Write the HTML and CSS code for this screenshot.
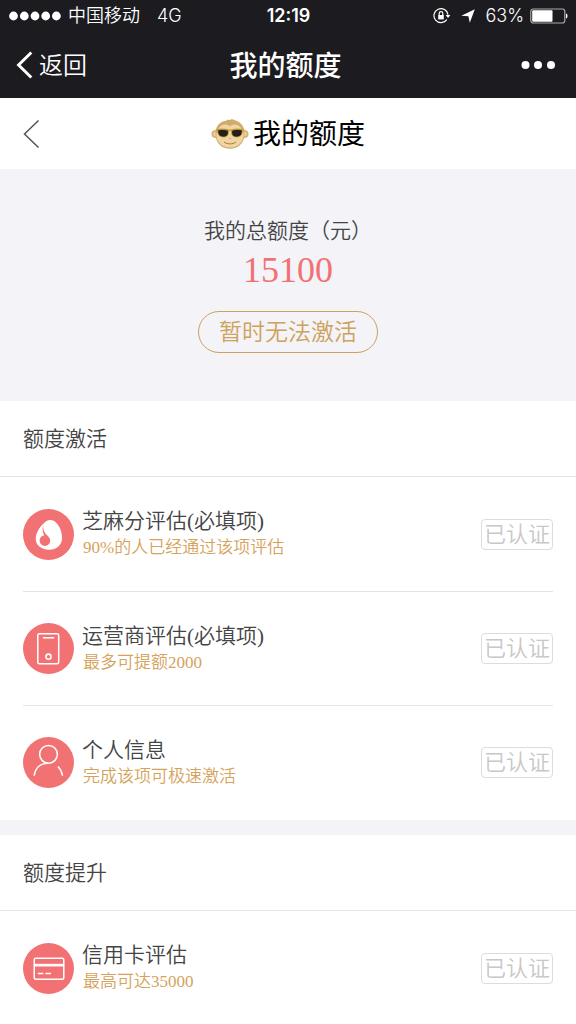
FILE: index.html
```html
<!DOCTYPE html>
<html lang="zh-CN">
<head>
<meta charset="utf-8">
<meta name="viewport" content="width=device-width, initial-scale=1">
<title>我的额度</title>
<link rel="stylesheet" href="styles.css">
</head>
<body>
<div class="top">
  <div class="status">
    <div class="status-left">
      <svg class="signal" width="52" height="10" viewBox="0 0 52 10" fill="#fff"><circle cx="4.5" cy="5" r="4.4"/><circle cx="15.3" cy="5" r="4.4"/><circle cx="26" cy="5" r="4.4"/><circle cx="36.7" cy="5" r="4.4"/><circle cx="47.4" cy="5" r="4.4"/></svg>
      <span>中国移动</span>
      <span class="network">4G</span>
    </div>
    <div class="clock">12:19</div>
    <div class="status-right">
      <svg width="18" height="16" viewBox="0 0 18 16" fill="none" stroke="#fff" stroke-width="1.2"><path d="M13.8 11.5A7 7 0 1 1 14.9 6.8"/><path d="M12.6 7h4.8L15 10z" fill="#fff" stroke="none"/><path d="M5.2 7h5.6v4.4H5.2z" fill="#fff" stroke="none"/><path d="M6.2 7V5.4a1.8 1.8 0 0 1 3.6 0V7"/></svg>
      <svg class="locate" width="14" height="14" viewBox="0 0 14 14" fill="#fff"><path d="M13.8.3 8.800 13.8 7.400 7.300.3 6.800z"/></svg>
      <span>63%</span>
      <svg width="38" height="16" viewBox="0 0 38 16"><rect x=".8" y="1" width="34" height="14" rx="2.5" fill="none" stroke="#aaa" stroke-width="1.2"/><rect x="2.2" y="2.3" width="20.3" height="11.4" rx="1" fill="#fff"/><path d="M36 5.5c2 .3 2 4.700 0 5z" fill="#fff"/></svg>
    </div>
  </div>
  <div class="nav">
    <button class="nav-back" type="button">
      <svg width="17" height="28" viewBox="0 0 17 28" fill="none" stroke="#fff" stroke-width="3"><path d="M15.300 1.500 2.600 14 15.300 26.500"/></svg>
      <span>返回</span>
    </button>
    <div class="nav-title">我的额度</div>
    <button class="nav-more" type="button" aria-label="更多">
      <svg width="34" height="10" viewBox="0 0 34 10" fill="#fff"><circle cx="4.500" cy="5" r="4"/><circle cx="17" cy="5" r="4"/><circle cx="30" cy="5" r="4"/></svg>
    </button>
  </div>
</div>

<header class="header">
  <button class="header-back" type="button" aria-label="返回">
    <svg width="17" height="30" viewBox="0 0 17 30" fill="none" stroke="#555" stroke-width="1.500"><path d="M15.500 1.500 1.500 15 15.500 28.500"/></svg>
  </button>
  <h1 class="header-title">
    <svg width="38" height="32" viewBox="0 0 38 32">
      <circle cx="4.500" cy="16" r="4" fill="#d8b477"/><circle cx="33.500" cy="16" r="4" fill="#d8b477"/>
      <circle cx="4.800" cy="16" r="2.300" fill="#f1d7a5"/><circle cx="33.200" cy="16" r="2.300" fill="#f1d7a5"/>
      <path d="M13 3c2 0 3-.8 4-1.800.3.900.9 1 1.600.7 1.500-.700 3.400-.9 5.400.4C31 4.500 34 10 33.500 17 33 25.500 27 30.800 19 30.800S5 25.500 4.500 17C4 10 7 5 13 3z" fill="#d0ab6d"/>
      <path d="M19 8c3-2 7-2.500 10 .8 4.500 5 4.500 11.200 1 15.500-2.500 3.700-6.500 5.300-11 5.300S10.500 28 8 24.300c-3.500-4.300-3.500-10.500 1-15.500C12 5.500 16 6 19 8z" fill="#f0d5a1"/>
      <path d="M5 12c4-1 9-1 13 .3h2c4-1.300 9-1.300 13-.3" fill="none" stroke="#cda23e" stroke-width="1.600"/>
      <path d="M6.800 12c3-.8 7.500-.8 10.500.5.500 4.200-1 6.500-4.800 6.500s-6-2-5.700-7zM31.200 12c-3-.8-7.500-.8-10.500.5-.5 4.200 1 6.500 4.800 6.500s6-2 5.700-7z" fill="#22201d" stroke="#c99b32" stroke-width=".8"/>
      <path d="M13 24c3.500 2.500 8.500 2.500 12 0" fill="none" stroke="#a5763d" stroke-width="1"/>
      <path d="M18 20.500h.6m1 0h.6" stroke="#a5763d" stroke-width=".8"/>
    </svg>
    <span>我的额度</span>
  </h1>
</header>

<main>
  <section class="summary">
    <div class="summary-label">我的总额度（元）</div>
    <div class="summary-amount">15100</div>
    <button class="summary-button" type="button">暂时无法激活</button>
  </section>

  <section class="group">
    <h2 class="group-title">额度激活</h2>
    <ul class="list">
      <li class="item">
        <svg class="item-icon" viewBox="0 0 50 50"><circle cx="25" cy="25" r="25" fill="#f27173"/><path d="M20.500 14C22.500 11 26.500 9.800 30 11.500c5.500 3 8.500 11 8.300 17.500-.3 7-6 11.300-13 11-7.500-.2-12.800-4.500-12.800-10.500 0-6 3.500-11.500 8-15.500z" fill="#fff"/><path d="M20.300 15c-1.300 4 .2 7.500 2.600 10 2.500 2.600 3.800 3.600 3.800 6a5.200 5.200 0 0 1-10.400 0c0-2.700 1.800-4.600 4.600-5.200-2-3.400-2.300-7-.6-10.800z" fill="#f27173"/></svg>
        <div class="item-text"><h3 class="item-title">芝麻分评估(必填项)</h3><p class="item-note">90%的人已经通过该项评估</p></div>
        <span class="badge">已认证</span>
      </li>
      <li class="item">
        <svg class="item-icon" viewBox="0 0 50 50"><circle cx="25" cy="25" r="25" fill="#f27173"/><g fill="none" stroke="#fff" stroke-width="1.500"><rect x="14.500" y="10.500" width="20.500" height="29.500" rx="1.500"/><path d="M19.500 14.500h11"/><circle cx="25" cy="33" r="2.500"/></g></svg>
        <div class="item-text"><h3 class="item-title">运营商评估(必填项)</h3><p class="item-note">最多可提额2000</p></div>
        <span class="badge">已认证</span>
      </li>
      <li class="item">
        <svg class="item-icon" viewBox="0 0 50 50"><circle cx="25" cy="25" r="25" fill="#f27173"/><g fill="none" stroke="#fff" stroke-width="1.500"><circle cx="25" cy="17" r="8.700"/><path d="M11 38c1-7.500 6-12.300 13.500-12.300M34.300 29c2.200 2.300 3.900 5.500 4.400 9"/></g></svg>
        <div class="item-text"><h3 class="item-title">个人信息</h3><p class="item-note">完成该项可极速激活</p></div>
        <span class="badge">已认证</span>
      </li>
    </ul>
  </section>

  <section class="group">
    <h2 class="group-title">额度提升</h2>
    <ul class="list">
      <li class="item">
        <svg class="item-icon" viewBox="0 0 50 50"><circle cx="25" cy="25" r="25" fill="#f27173"/><rect x="11" y="15" width="29" height="20.500" rx="1.500" fill="none" stroke="#fff" stroke-width="1.500"/><path d="M11 21.700h29" stroke="#fff" stroke-width="2.600"/><path d="M14.500 29.800h5.500m2 0h5.500" stroke="#fff" stroke-width="1.500"/></svg>
        <div class="item-text"><h3 class="item-title">信用卡评估</h3><p class="item-note">最高可达35000</p></div>
        <span class="badge">已认证</span>
      </li>
    </ul>
  </section>
</main>
</body>
</html>
```
FILE: styles.css
```css
* {
  box-sizing: border-box;
}

body {
  margin: 0;
  background: #f3f3f8;
  color: #444;
  font-family: "Liberation Serif", "Noto Sans CJK SC", serif;
  font-weight: 350;
}

h1, h2, h3, p, ul {
  margin: 0;
  padding: 0;
  font-weight: inherit;
}

button {
  padding: 0;
  border: 0;
  background: none;
  color: inherit;
  font: inherit;
}

svg {
  display: block;
  flex: none;
}

.top {
  background: #1c1b20;
  color: #fff;
  font-family: Inter, "Noto Sans CJK SC", sans-serif;
}

.status,
.nav {
  display: grid;
  grid-template-columns: 1fr auto 1fr;
  align-items: center;
}

.status {
  height: 32px;
  padding: 0 8px 0 9px;
  font-size: 18px;
  line-height: 32px;
}

.status-left,
.status-right {
  display: flex;
  align-items: center;
  gap: 7px;
}

.status-right {
  justify-content: flex-end;
  gap: 6px;
}

.network {
  margin-left: 10px;
}

.locate {
  margin: 0 4px;
}

.clock {
  font-weight: 600;
}

.nav {
  height: 66px;
  padding: 0 21px 0 16px;
}

.nav-back {
  display: flex;
  align-items: center;
  gap: 6px;
  font-size: 24px;
  line-height: 36px;
}

.nav-back span {
  padding-top: 2px;
}

.nav-title {
  padding-top: 2px;
  font-size: 28px;
  font-weight: 500;
  line-height: 40px;
}

.nav-more {
  justify-self: end;
}

.header {
  display: grid;
  grid-template-columns: 1fr auto 1fr;
  align-items: center;
  height: 71px;
  padding: 0 23px;
  background: #fff;
  color: #000;
}

.header-back {
  justify-self: start;
}

.header-title {
  display: flex;
  align-items: center;
  gap: 4px;
  font-size: 28px;
  font-weight: 400;
  line-height: 40px;
}

.header-title span {
  padding-top: 2px;
}

.summary {
  display: flex;
  flex-direction: column;
  align-items: center;
  padding: 46px 24px 48px;
}

.summary-label {
  font-size: 21px;
  line-height: 32px;
}

.summary-amount {
  color: #f27173;
  font-size: 36px;
  line-height: 46px;
}

.summary-button {
  margin-top: 18px;
  padding: 1px 20px 0;
  border: 1px solid #cda25a;
  border-radius: 21px;
  color: #cda25a;
  font-size: 23px;
  line-height: 39px;
}

.group {
  background: #fff;
}

.group + .group {
  margin-top: 15px;
}

.group-title {
  padding: 1px 23px 0;
  border-bottom: 1px solid #e3e3e3;
  font-size: 21px;
  line-height: 74px;
}

.list {
  padding: 0 23px 1px;
  list-style: none;
}

.item {
  display: flex;
  align-items: center;
  height: 114px;
}

.item + .item {
  border-top: 1px solid #e3e3e3;
}

.item-icon {
  width: 51px;
  height: 51px;
}

.item-text {
  flex: 1;
  margin-left: 8px;
}

.item-title {
  font-size: 21px;
  line-height: 28px;
}

.item-note {
  padding-left: 1px;
  color: #d5a35b;
  font-size: 17px;
  line-height: 26px;
}

.badge {
  padding: 0 2px;
  border: 1px solid #dcdcdc;
  border-radius: 4px;
  color: #c8c8c8;
  font-size: 22px;
  line-height: 29px;
}
```
